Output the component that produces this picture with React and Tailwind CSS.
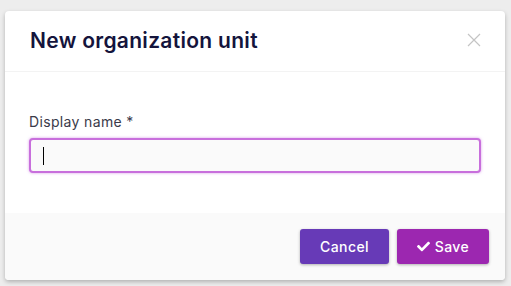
import { FaCheck } from 'react-icons/fa'

function App() {
  return (
    <div
      className="min-h-screen bg-[#ededed] px-[5px] pt-[11px]"
      style={{ fontFamily: 'Inter, "Noto Sans", sans-serif' }}
    >
      <div className="w-[500px] overflow-hidden rounded-[4px] bg-white shadow-[0_2px_4px_rgba(0,0,0,0.25)]">
        <div className="flex h-[61px] items-center justify-between border-b border-[#f3f3f3] pl-[25px] pr-[24px]">
          <h2 className="text-[21px] font-semibold tracking-[0.3px] text-[#14143c]">New organization unit</h2>
          <svg width="14" height="14" viewBox="0 0 14 14" className="mb-[2px]">
            <path d="M1 1L13 13M13 1L1 13" stroke="#c4c4c4" strokeWidth="1.2" />
          </svg>
        </div>

        <div className="px-[24px] pb-[40px] pt-[40px]">
          <label className="block text-[14px] leading-[20px] tracking-[0.35px] text-[#3a3a4a]">Display name *</label>
          <div className="mt-[6px] flex h-[35px] items-center rounded-[4px] border-2 border-[#c86fdc] bg-[#fafafa] pl-[12px] shadow-[0_0_3px_rgba(190,90,220,0.6)]">
            <span className="h-[18px] w-px bg-black" />
          </div>
        </div>

        <div className="flex justify-end gap-[8px] bg-[#fafafa] pb-[16px] pr-[16px] pt-[16px]">
          <button className="h-[35px] w-[89px] rounded-[3px] bg-[#673ab7] text-[14px] font-medium tracking-[0.4px] text-white shadow-[0_1px_3px_rgba(0,0,0,0.3)]">
            Cancel
          </button>
          <button className="flex h-[35px] w-[92px] items-center justify-center gap-[5px] rounded-[3px] bg-[#9c27b0] text-[14px] font-medium tracking-[0.4px] text-white shadow-[0_1px_3px_rgba(0,0,0,0.3)]">
            <FaCheck className="text-[13px]" />
            Save
          </button>
        </div>
      </div>
    </div>
  )
}

export default App
